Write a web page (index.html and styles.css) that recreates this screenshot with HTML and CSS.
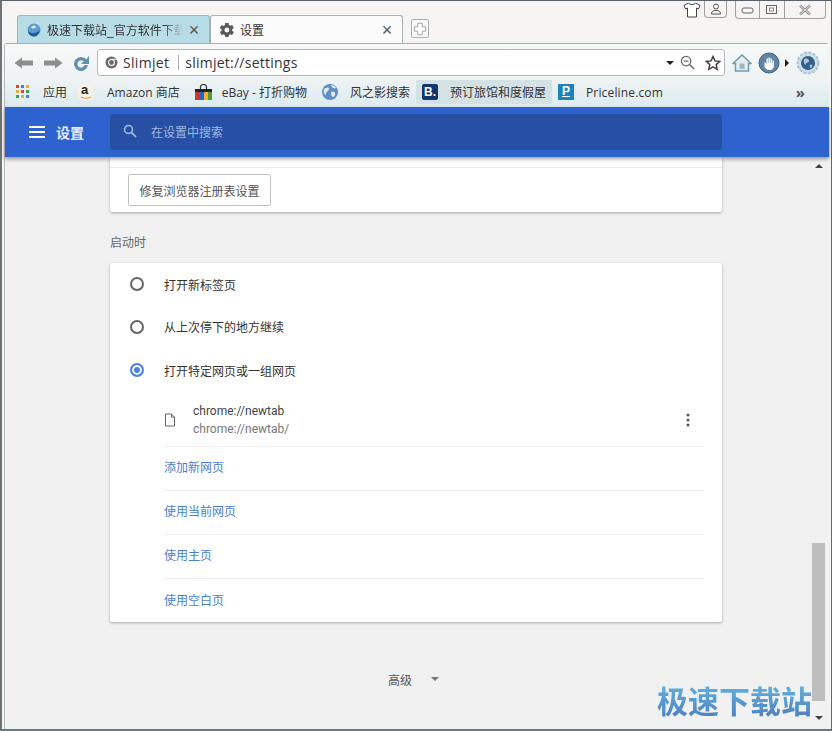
FILE: index.html
```html
<!DOCTYPE html>
<html lang="zh-CN">
<head>
<meta charset="utf-8">
<title>设置</title>
<link rel="stylesheet" href="styles.css">
</head>
<body>
<div class="window">
  <div class="titlebar">
    <div class="tabs">
      <div class="tab inactive">
        <svg class="fav" viewBox="0 0 14 14"><circle cx="7" cy="7" r="6.500" fill="#5a9bd0"/><path d="M1 8c3 3 8 3 12-1-1 4-3 6.500-6 6.500S1 11 1 8z" fill="#1f5e9c"/><path d="M4 4c2-2 4-2 5 0-1 2-4 2-5 0z" fill="#d6ecf7"/></svg>
        <span class="tab-title">极速下载站_官方软件下载</span>
        <span class="tab-close">×</span>
      </div>
      <div class="tab active">
        <svg class="fav" viewBox="2 2 20 20"><path fill="#5a5a5a" d="M19.400 13c.04-.32.060-.66.060-1s-.02-.68-.07-1l2.150-1.680c.19-.15.240-.42.120-.64l-2.040-3.530c-.12-.22-.38-.3-.62-.22l-2.540 1.020c-.53-.4-1.100-.74-1.720-1l-.38-2.700A.5.500 0 0 0 13.860 2H9.800a.5.500 0 0 0-.5.430l-.38 2.700c-.62.260-1.200.6-1.720 1L4.660 5.100c-.24-.08-.5 0-.62.220L2 8.850c-.12.220-.07.490.12.640L4.270 11c-.05.320-.07.660-.07 1s.02.680.07 1l-2.150 1.680c-.19.150-.240.420-.12.640l2.040 3.530c.12.220.38.300.62.220l2.540-1.020c.53.400 1.100.740 1.720 1l.38 2.700c.04.250.250.430.500.430h4.060c.25 0 .460-.180.500-.430l.38-2.700c.62-.260 1.200-.600 1.720-1l2.540 1.020c.24.080.5 0 .62-.220l2.040-3.530c.12-.220.070-.490-.12-.640L19.400 13zM11.830 15.500a3.500 3.500 0 1 1 0-7 3.500 3.500 0 0 1 0 7z"/></svg>
        <span class="tab-title">设置</span>
        <span class="tab-close">×</span>
      </div>
      <div class="newtab">
        <svg viewBox="0 0 16 16" width="14" height="14"><path d="M5.500 1.500h5v4h4v5h-4v4h-5v-4h-4v-5h4z" fill="#fff" stroke="#9a9a9a"/></svg>
      </div>
    </div>
    <div class="winbtns">
      <svg class="shirt" viewBox="0 0 18 16" width="18" height="16"><path d="M5.500 1 1 3.500l1.500 3.500 2-1V15h9V6l2 1L17 3.500 12.500 1c-1 2-6 2-7 0z" fill="#fff" stroke="#444"/></svg>
      <div class="wb user"><svg viewBox="0 0 14 12" width="14" height="12"><circle cx="7" cy="3.500" r="2.500" fill="none" stroke="#555"/><path d="M2.500 11V9.500L5 7.500h4l2.500 2V11z" fill="none" stroke="#555"/></svg></div>
      <div class="wb-group">
        <div class="wb min"><svg viewBox="0 0 14 8" width="14" height="8"><rect x="1" y="2" width="11" height="5" rx="2" fill="none" stroke="#666"/></svg></div>
        <div class="wb"><svg viewBox="0 0 14 12" width="14" height="12"><rect x="1.500" y="1.500" width="10" height="8" fill="none" stroke="#666"/><rect x="4.500" y="4" width="4" height="3" fill="none" stroke="#888"/></svg></div>
        <div class="wb wide"><svg viewBox="0 0 14 12" width="14" height="12"><path d="M2 1.500 12 10.500M12 1.500 2 10.500" stroke="#888" stroke-width="2.400" fill="none"/><path d="M2 1.500 12 10.500M12 1.500 2 10.500" stroke="#fff" stroke-width=".8" fill="none"/></svg></div>
      </div>
    </div>
  </div>

  <div class="browser">
    <div class="toolbar">
      <div class="nav">
        <svg viewBox="0 0 20 14" width="20" height="14"><path d="M0.500 7 8 1.500V4.500h11v5H8v3z" fill="#8d8f8e"/></svg>
        <svg viewBox="0 0 20 14" width="20" height="14"><path d="M19.500 7 12 1.500V4.500H1v5h11v3z" fill="#8d8f8e"/></svg>
        <svg viewBox="0 0 18 18" width="18" height="18"><path d="M14.500 5.500A7 7 0 1 0 16 11h-3.500a3.600 3.600 0 1 1-.8-3.500L9 10h8V1.500z" fill="#5f93ad"/></svg>
      </div>
      <div class="omnibox">
        <svg class="chrome" viewBox="0 0 14 14" width="13" height="13"><circle cx="7" cy="7" r="6.500" fill="#6b6b6b"/><circle cx="7" cy="7" r="3.200" fill="#6b6b6b" stroke="#fff" stroke-width="1.200"/><path d="M7 3.500h6" stroke="#fff"/></svg>
        <span class="scheme">Slimjet</span>
        <span class="sep"></span>
        <span class="url">slimjet://settings</span>
        <span class="dd"></span>
        <svg class="zoom-i" viewBox="0 0 16 16" width="15" height="15"><circle cx="6.500" cy="6.500" r="5" fill="none" stroke="#666" stroke-width="1.300"/><path d="M4 6.500h5" stroke="#666" stroke-width="1.300"/><path d="m10.500 10.500 4.500 4.500" stroke="#666" stroke-width="1.600"/></svg>
        <svg viewBox="0 0 16 16" width="16" height="16"><path d="m8 1.500 2 4.400 4.800.5-3.600 3.200 1 4.700L8 11.900l-4.200 2.400 1-4.700L1.200 6.400 6 5.900z" fill="#fff" stroke="#444" stroke-width="1.500"/></svg>
      </div>
      <div class="tools">
        <svg viewBox="0 0 20 18" width="20" height="18"><path d="M1 9.500 10 1l9 8.500h-2.500V17h-13V9.500z" fill="#e4eef2" stroke="#6f9bb0" stroke-width="1.500"/><rect x="7.500" y="9.500" width="5" height="5.500" fill="#9fb6c2"/></svg>
        <svg viewBox="0 0 22 22" width="22" height="22"><circle cx="11" cy="11" r="10" fill="#5f84a4" stroke="#40607c"/><path d="M6.500 10V14c0 2 2 4 5 4s4.500-2 4.500-4V8.500h-1.500V11h-.5V6.500h-1.500V11H12V5.500h-1.500V11H10V6.500H8.500V12.500L7 10z" fill="#fff"/></svg>
        <span class="tri-right"></span>
        <svg viewBox="0 0 24 24" width="24" height="24"><circle cx="12" cy="12" r="10.500" fill="#cfdfe8" stroke="#a9c3d2" stroke-width="2" stroke-dasharray="3 1.500"/><circle cx="12" cy="12" r="7" fill="#33608a"/><path d="M8 8c3-1 5 0 5 2s-3 1-3 3-3 0-2-5zM14 14c2-1 3 0 2 2s-3 1-2-2z" fill="#a8c6d8"/></svg>
      </div>
    </div>

    <div class="bookmarks">
      <div class="bm">
        <svg class="bm-icon" viewBox="0 0 14 14" width="14" height="14"><g><rect x="0" y="0" width="3" height="3" fill="#d9453a"/><rect x="5" y="0" width="3" height="3" fill="#3f7fd8"/><rect x="10" y="0" width="3" height="3" fill="#e2b33c"/><rect x="0" y="5" width="3" height="3" fill="#e2b33c"/><rect x="5" y="5" width="3" height="3" fill="#d9453a"/><rect x="10" y="5" width="3" height="3" fill="#3f9e54"/><rect x="0" y="10" width="3" height="3" fill="#3f9e54"/><rect x="5" y="10" width="3" height="3" fill="#e2b33c"/><rect x="10" y="10" width="3" height="3" fill="#3f7fd8"/></g></svg>
        <span>应用</span>
      </div>
      <div class="bm">
        <svg class="bm-icon" viewBox="0 0 16 16" width="16" height="16"><rect width="16" height="16" rx="2" fill="#f5f1e6"/><path d="M3 13c3 1.500 7 1.500 10 0" stroke="#e99b2a" stroke-width="1.200" fill="none"/></svg>
        <b class="amazon-a">a</b>
        <span>Amazon 商店</span>
      </div>
      <div class="bm">
        <svg class="bm-icon" viewBox="0 0 17 16" width="17" height="16"><path d="M5.500 5V3a3 2.500 0 0 1 6 0v2" fill="none" stroke="#333" stroke-width="1.200"/><rect x="0" y="5" width="17" height="3" fill="#222"/><rect x="0" y="8" width="5" height="8" fill="#c63a30"/><rect x="5" y="8" width="4" height="8" fill="#2f62c4"/><rect x="9" y="8" width="4" height="8" fill="#e6b430"/><rect x="13" y="8" width="4" height="8" fill="#4e9a3e"/></svg>
        <span>eBay - 打折购物</span>
      </div>
      <div class="bm">
        <svg class="bm-icon" viewBox="0 0 16 16" width="16" height="16"><circle cx="8" cy="8" r="8" fill="#5c8fc8"/><path d="M2 5c3-2 5-2 5 0s-3 2-3 5-3-1-2-5zM9 8c3-1 5 0 4 3s-4 3-4-3zM9 1c2 0 4 1 5 3-2 1-4 0-5-3z" fill="#e4eef6"/></svg>
        <span>风之影搜索</span>
      </div>
      <div class="bm hover">
        <span class="b-logo">B.</span>
        <span>预订旅馆和度假屋</span>
      </div>
      <div class="bm">
        <span class="p-logo">P</span>
        <span>Priceline.com</span>
      </div>
      <span class="more">»</span>
    </div>

    <header class="appbar">
      <div class="brand">
        <svg viewBox="0 0 16 12" width="16" height="12"><path d="M0 1h16M0 6h16M0 11h16" stroke="#fff" stroke-width="2"/></svg>
        <span>设置</span>
      </div>
      <div class="search">
        <svg viewBox="0 0 14 14" width="14" height="14"><circle cx="5.500" cy="5.500" r="4" fill="none" stroke="#a9c4ee" stroke-width="1.500"/><path d="m8.500 8.500 4.500 4.500" stroke="#a9c4ee" stroke-width="1.700"/></svg>
        <span>在设置中搜索</span>
      </div>
    </header>

    <div class="viewport">
      <main class="page">
        <section class="card top-card">
          <div class="top-strip"></div>
          <div class="top-action"><button class="btn">修复浏览器注册表设置</button></div>
        </section>

        <h2 class="section-title">启动时</h2>

        <section class="card startup">
          <div class="radio-row first"><span class="radio"></span><span>打开新标签页</span></div>
          <div class="radio-row"><span class="radio"></span><span>从上次停下的地方继续</span></div>
          <div class="radio-row"><span class="radio on"></span><span>打开特定网页或一组网页</span></div>
          <div class="sublist">
            <div class="page-item">
              <svg viewBox="0 0 12 14" width="12" height="14"><path d="M1.500 1h6l3 3.200v8.800h-9zM7.500 1v3.200h3" fill="#fff" stroke="#666"/></svg>
              <div class="page-text">
                <div class="pt-name">chrome://newtab</div>
                <div class="pt-url">chrome://newtab/</div>
              </div>
              <svg class="dots" viewBox="0 0 4 14" width="4" height="14"><circle cx="2" cy="2" r="1.500" fill="#555"/><circle cx="2" cy="7" r="1.500" fill="#555"/><circle cx="2" cy="12" r="1.500" fill="#555"/></svg>
            </div>
            <a class="link-row">添加新网页</a>
            <a class="link-row">使用当前网页</a>
            <a class="link-row">使用主页</a>
            <a class="link-row">使用空白页</a>
          </div>
        </section>

        <div class="advanced"><span>高级</span><span class="adv-arrow"></span></div>
      </main>
      <aside class="scrollbar">
        <span class="sb-up"></span>
        <span class="sb-track"><span class="sb-thumb"></span></span>
        <span class="sb-down"></span>
      </aside>
      <div class="watermark">极速下载站</div>
    </div>
  </div>
</div>
</body>
</html>
```

FILE: styles.css
```css
* { box-sizing: border-box; }
html, body { margin: 0; padding: 0; }
body {
  width: 832px;
  height: 731px;
  overflow: hidden;
  background: #f6f5f4;
  font-family: "Liberation Sans", "Noto Sans CJK SC", sans-serif;
  color: #333;
}
.window {
  height: 731px;
  display: flex;
  flex-direction: column;
  border-top: 1px solid #5a6468;
  border-left: 2px solid #6e7478;
  border-right: 1px solid #5f6a6e;
  border-bottom: 2px solid #5f7a80;
  background: #f6f5f4;
}
.titlebar {
  height: 42px;
  flex: none;
  display: flex;
  justify-content: space-between;
  padding-left: 15px;
  padding-right: 5px;
}
.tabs { display: flex; align-items: flex-end; }
.tab {
  height: 28px;
  display: flex;
  align-items: center;
  border: 1px solid #a8b0b2;
  border-bottom: none;
  border-radius: 3px 3px 0 0;
  font-size: 12px;
  padding-left: 9px;
  padding-right: 8px;
}
.tab.inactive { width: 193px; background: #b9dde6; color: #333; }
.tab.active { width: 193px; background: #fbfbfb; }
.fav { width: 14px; height: 14px; flex: none; margin-right: 6px; }
.tab.active .fav { margin-right: 6px; }
.tab-title { flex: 1; white-space: nowrap; overflow: hidden; }
.tab.inactive .tab-title { -webkit-mask-image: linear-gradient(90deg, #000 85%, transparent); mask-image: linear-gradient(90deg, #000 85%, transparent); }
.tab-close { font-size: 18px; line-height: 18px; color: #555; width: 14px; text-align: center; flex: none; margin-left: 4px; }
.newtab {
  width: 18px;
  height: 19px;
  margin-left: 8px;
  margin-bottom: 5px;
  border: 1px solid #b0b0b0;
  border-radius: 2px;
  background: #f8f8f8;
  display: flex;
  align-items: center;
  justify-content: center;
}
.winbtns { display: flex; align-items: flex-start; gap: 0; }
.shirt { margin-top: 1px; margin-right: 3px; }
.wb {
  width: 25px;
  height: 17px;
  display: flex;
  align-items: center;
  justify-content: center;
}
.wb.user { width: 23px; border: 1px solid #a0a0a0; border-top: none; border-radius: 0 0 4px 4px; margin-right: 8px; }
.wb.min { width: 23px; }
.wb.wide { width: 41px; }
.wb-group { display: flex; border: 1px solid #a0a0a0; border-top: none; border-radius: 0 0 4px 4px; }
.wb-group .wb + .wb { border-left: 1px solid #a0a0a0; }

.browser {
  flex: 1;
  min-height: 0;
  margin-left: 2px;
  margin-right: 2px;
  display: flex;
  flex-direction: column;
  border-top: 1px solid #a9adad;
  border-left: 1px solid #b5b9b9;
  border-radius: 3px 3px 0 0;
}
.toolbar {
  height: 35px;
  flex: none;
  display: flex;
  align-items: center;
  background: linear-gradient(#f7f8f8, #eff3f4);
  padding-left: 9px;
  padding-top: 2px;
}
.nav { display: flex; align-items: center; gap: 9px; width: 83px; }
.omnibox {
  width: 628px;
  height: 27px;
  display: flex;
  align-items: center;
  background: #fff;
  border: 1px solid #b4b8b8;
  border-radius: 3px;
  padding-left: 7px;
  padding-right: 3px;
  font-size: 14px;
  color: #333;
}
.chrome { margin-right: 5px; }
.scheme { font-family: "Open Sans", sans-serif; font-size: 14px; letter-spacing: .3px; }
.sep { width: 1px; height: 15px; background: #aaa; margin: 0 6px 0 9px; }
.url { flex: 1; font-family: "Open Sans", sans-serif; font-size: 14px; letter-spacing: .25px; }
.dd { width: 0; height: 0; border: 4px solid transparent; border-top: 4px solid #222; border-bottom: none; margin-right: 6px; }
.zoom-i { margin-right: 10px; }
.tools { display: flex; align-items: center; padding-left: 7px; }
.tools svg:nth-child(1) { margin-right: 6px; }
.tri-right { width: 0; height: 0; border: 4px solid transparent; border-left: 4px solid #222; border-right: none; margin: 0 7px 0 5px; }

.bookmarks {
  height: 28px;
  flex: none;
  display: flex;
  align-items: center;
  background: linear-gradient(#eff3f4, #dcebef);
  padding-left: 8px;
  padding-bottom: 2px;
  font-family: "Open Sans", "Noto Sans CJK SC", sans-serif;
  font-size: 12px;
  color: #333;
}
.bm { display: flex; align-items: center; height: 24px; padding: 0 5px 0 3px; white-space: nowrap; }
.bm:nth-child(1) { margin-right: 3px; }
.bm:nth-child(1) .bm-icon { margin-right: 13px; }
.bm:nth-child(2) { margin-right: 7px; position: relative; }
.bm:nth-child(2) .bm-icon { margin-right: 13px; }
.amazon-a { position: absolute; left: 6px; top: 2px; font: bold 13px "Liberation Sans", sans-serif; color: #222; }
.bm:nth-child(3) .bm-icon { margin-right: 10px; }
.bm:nth-child(3) { margin-right: 7px; }
.bm:nth-child(4) .bm-icon { margin-right: 12px; }
.bm:nth-child(4) { margin-right: 1px; }
.bm.hover { background: #d4e1e5; padding-left: 6px; width: 136px; }
.b-logo { width: 16px; height: 16px; background: #12356b; color: #fff; font: bold 12px/16px "Liberation Sans", sans-serif; text-align: center; border-radius: 2px; margin-right: 12px; flex: none; }
.p-logo { width: 16px; height: 16px; background: #1d83bf; color: #fff; font: bold 12px/15px "Liberation Sans", sans-serif; text-align: center; text-decoration: underline; margin-right: 12px; flex: none; }
.bm:nth-child(6) { padding-left: 6px; letter-spacing: .15px; }
.more { margin-left: auto; margin-right: 24px; font-size: 15px; line-height: 15px; color: #555; font-weight: bold; }

.appbar {
  height: 50px;
  flex: none;
  display: flex;
  align-items: center;
  background: #2e63cf;
  box-shadow: 0 2px 4px rgba(0, 0, 0, .4);
  position: relative;
  z-index: 2;
  padding-right: 107px;
}
.brand {
  width: 105px;
  display: flex;
  align-items: center;
  padding-left: 24px;
  gap: 11px;
  color: #e8eefb;
  font-size: 14px;
  font-weight: bold;
}
.search {
  flex: 1;
  height: 36px;
  background: #2750a5;
  border-radius: 2px;
  display: flex;
  align-items: center;
  padding-left: 13px;
  padding-bottom: 2px;
  gap: 14px;
  color: #9db8e6;
  font-size: 12px;
}

.viewport {
  flex: 1;
  min-height: 0;
  display: flex;
  background: #f1f1f1;
  position: relative;
  overflow: hidden;
}
.page { flex: 1; padding-left: 105px; padding-right: 88px; display: flex; flex-direction: column; }
.card {
  background: #fff;
  border-radius: 2px;
  box-shadow: 0 1px 3px rgba(0, 0, 0, .3);
}
.top-card { height: 55px; flex: none; }
.top-strip { height: 11px; border-bottom: 1px solid #ececec; }
.top-action { padding: 6px 0 0 18px; }
.btn {
  height: 32px;
  width: 143px;
  padding: 0;
  background: #fff;
  border: 1px solid #c2c2c2;
  border-radius: 2px;
  font: 12px "Liberation Sans", "Noto Sans CJK SC", sans-serif;
  color: #555;
}
.section-title {
  margin: 23px 0 12px;
  height: 16px;
  font: normal 12px/16px "Liberation Sans", "Noto Sans CJK SC", sans-serif;
  color: #666;
}
.startup { height: 359px; flex: none; padding: 0 18px 0 20px; }
.radio-row { height: 43.500px; display: flex; align-items: center; gap: 20px; font-size: 12px; color: #333; }
.radio-row.first { height: 42px; }
.radio { width: 14px; height: 14px; flex: none; border: 2px solid #666; border-radius: 50%; }
.radio.on { border-color: #4a80e8; background: #4a80e8; box-shadow: inset 0 0 0 2px #fff; }
.sublist { padding-left: 34px; }
.page-item { height: 55px; display: flex; align-items: center; border-bottom: 1px solid #ececec; padding-right: 14px; padding-top: 2px; }
.page-text { flex: 1; padding-left: 17px; font-family: Roboto, sans-serif; font-size: 12px; line-height: 18px; }
.pt-name { color: #444; }
.pt-url { color: #777; }
.link-row { display: flex; align-items: center; height: 44px; padding-bottom: 4px; color: #4a7ed0; font-size: 12px; border-bottom: 1px solid #ececec; }
.link-row:last-child { border-bottom: none; }
.advanced {
  margin-top: 48px;
  padding-left: 278px;
  display: flex;
  align-items: center;
  gap: 19px;
  height: 18px;
  font-size: 12px;
  color: #555;
}
.adv-arrow { width: 0; height: 0; border: 4px solid transparent; border-top: 4px solid #777; border-bottom: none; }
.scrollbar { width: 17px; margin-right: 2px; display: flex; flex-direction: column; align-items: center; }
.sb-up { width: 0; height: 0; margin-top: 7px; border: 4px solid transparent; border-bottom: 4px solid #444; border-top: none; }
.sb-track { flex: 1; width: 13px; display: flex; flex-direction: column; justify-content: flex-end; padding-bottom: 15px; }
.sb-thumb { display: block; width: 13px; height: 158px; background: #bdbdbd; }
.sb-down { width: 0; height: 0; margin-bottom: 9px; border: 4px solid transparent; border-top: 4px solid #444; border-bottom: none; }
.watermark {
  position: absolute;
  right: 17px;
  bottom: 11px;
  font: bold 31px/36px "Noto Sans CJK SC", sans-serif;
  background: linear-gradient(#62b6e0, #4f7fc0);
  -webkit-background-clip: text;
  background-clip: text;
  color: transparent;
}
```
